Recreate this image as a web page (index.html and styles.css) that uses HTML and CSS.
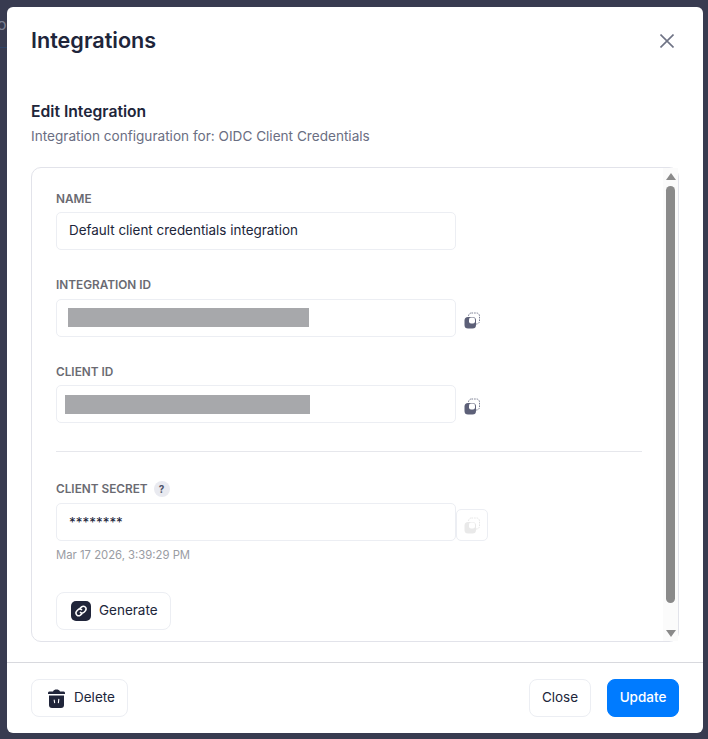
FILE: index.html
```html
<!DOCTYPE html>
<html lang="en">
<head>
<meta charset="utf-8">
<title>Integrations</title>
<link rel="stylesheet" href="styles.css">
</head>
<body>
<div class="peek"><span class="peek-text">o</span></div>
<main class="modal">
  <header class="modal-head">
    <h1 class="title">Integrations</h1>
    <button class="close-x" aria-label="Close">
      <svg width="14" height="14" viewBox="0 0 14 14"><path d="M.5 .5 L13.5 13.5 M13.5 .5 L.5 13.5" stroke="#6f7385" stroke-width="1.6" fill="none"/></svg>
    </button>
  </header>
  <section class="modal-body">
    <h2 class="section-title">Edit Integration</h2>
    <p class="section-sub">Integration configuration for: OIDC Client Credentials</p>
    <div class="panel">
      <div class="field">
        <label class="label">NAME</label>
        <div class="row"><div class="input">Default client credentials integration</div></div>
      </div>
      <div class="field field-int">
        <label class="label">INTEGRATION ID</label>
        <div class="row">
          <div class="input"><span class="redact redact-a"></span></div>
          <span class="copy">
            <svg width="17" height="17" viewBox="0 0 17 17"><use href="#copy-icon"/></svg>
          </span>
        </div>
      </div>
      <div class="field">
        <label class="label">CLIENT ID</label>
        <div class="row">
          <div class="input"><span class="redact redact-b"></span></div>
          <span class="copy">
            <svg width="17" height="17" viewBox="0 0 17 17"><use href="#copy-icon"/></svg>
          </span>
        </div>
      </div>
      <hr class="divider">
      <div class="field secret">
        <label class="label">CLIENT SECRET <span class="help">?</span></label>
        <div class="row">
          <div class="input stars">********</div>
          <span class="copy-box">
            <svg width="17" height="17" viewBox="0 0 17 17"><use href="#copy-icon-off"/></svg>
          </span>
        </div>
        <p class="stamp">Mar 17 2026, 3:39:29 PM</p>
      </div>
      <button class="btn btn-gen">
        <svg class="gen-icon" width="20" height="20" viewBox="0 0 20 20">
          <rect width="20" height="20" rx="5" fill="#20253a"/>
          <path d="M9 7.4 L10.6 5.9 a2.7 2.7 0 0 1 3.8 3.8 L13 11.2 a2.7 2.7 0 0 1 -3.6 .2 M11 12.6 L9.4 14.1 a2.7 2.7 0 0 1 -3.8 -3.8 L7 8.8 a2.7 2.7 0 0 1 3.6 -.2" stroke="#fff" stroke-width="1.5" fill="none" stroke-linecap="round"/>
        </svg>
        <span class="btn-text">Generate</span>
      </button>
      <div class="scrollbar">
        <span class="arrow-up"></span>
        <span class="thumb"></span>
        <span class="arrow-down"></span>
      </div>
    </div>
  </section>
  <footer class="modal-foot">
    <button class="btn btn-del">
      <svg width="17" height="19" viewBox="0 0 17 19">
        <path d="M0 4 C0 3 1 2.6 2 2.6 H5 C5.5 .8 7 .4 8.5 .4 C10 .4 11.5 .8 12 2.6 H15 C16 2.6 17 3 17 4 V5 H0 Z" fill="#20253a"/>
        <path d="M1 6.6 H16 V16 A3 3 0 0 1 13 19 H4 A3 3 0 0 1 1 16 Z" fill="#20253a"/>
        <path d="M6.2 11 L6.6 13.6 M10.8 10.4 L10.4 13.6" stroke="#fff" stroke-width="1.1" stroke-linecap="round"/>
      </svg>
      <span class="btn-text">Delete</span>
    </button>
    <div class="foot-right">
      <button class="btn btn-close"><span class="btn-text">Close</span></button>
      <button class="btn btn-primary"><span class="btn-text">Update</span></button>
    </div>
  </footer>
</main>
<svg class="defs" width="0" height="0" aria-hidden="true">
  <defs>
    <g id="copy-icon">
      <rect x="4.5" y="1" width="11" height="11" rx="3" fill="none" stroke="#7d8094" stroke-width="1" stroke-dasharray="1.6 1"/>
      <rect x="0.5" y="5" width="11.5" height="11.5" rx="3.5" fill="#5d6078"/>
      <rect x="5" y="5.6" width="6" height="6" rx="2" fill="#fff"/>
    </g>
    <g id="copy-icon-off">
      <rect x="4.5" y="1" width="11" height="11" rx="3" fill="none" stroke="#e6e6e6" stroke-width="1" stroke-dasharray="1.6 1"/>
      <rect x="0.5" y="5" width="11.5" height="11.5" rx="3.5" fill="#e9e9e9"/>
      <rect x="5" y="5.6" width="6" height="6" rx="2" fill="#fff"/>
    </g>
  </defs>
</svg>
</body>
</html>
```
FILE: styles.css
```css
* { box-sizing: border-box; }
html, body { margin: 0; height: 739px; overflow: hidden; }
body {
  background: #383b50;
  padding: 7px 5px 6px 7px;
  font-family: Inter, "Noto Sans", sans-serif;
  color: #20253a;
  position: relative;
}
.peek { position: absolute; left: 0; top: 14px; width: 7px; height: 34px; border-bottom: 1px solid #2f4468; overflow: hidden; }
.peek-text { position: absolute; left: -3px; top: 0; font-size: 16px; color: #7d8092; }
.defs { position: absolute; }
.modal {
  background: #fff;
  border-radius: 6px;
  height: 726px;
  display: flex;
  flex-direction: column;
}
.modal-head {
  display: flex;
  justify-content: space-between;
  align-items: center;
  height: 66px;
  padding: 0 29px 0 24px;
}
.title { margin: 0; font-size: 21.6px; font-weight: 600; line-height: 28px; }
.close-x { border: 0; background: none; padding: 2px 0 0; display: flex; }
.modal-body { flex: 1; padding: 29px 24px 20px; display: flex; flex-direction: column; min-height: 0; }
.section-title { margin: 0; font-size: 15.7px; font-weight: 600; line-height: 20px; }
.section-sub { margin: 4px 0 0; font-size: 13.6px; line-height: 20px; color: #6a6e82; }
.panel {
  position: relative;
  margin-top: 21px;
  flex: 1;
  border: 1px solid #e2e3ea;
  border-radius: 10px;
  padding: 24px 36px 11px 24px;
}
.field { margin-bottom: 28px; }
.label { display: flex; align-items: center; gap: 6px; height: 14px; font-size: 11.8px; font-weight: 600; color: #6a6a72; margin-bottom: 6px; }
.field-int .label { margin-bottom: 7px; }
.secret .label { margin-bottom: 7px; }
.row { display: flex; align-items: flex-start; gap: 8px; }
.input {
  width: 400px;
  height: 38px;
  border: 1px solid #eceef3;
  border-radius: 5px;
  padding: 0 12px 2px;
  display: flex;
  align-items: center;
  font-size: 13.45px;
}
.stars { padding-bottom: 0; }
.redact { display: block; height: 19px; background: #a7a8ab; }
.redact-a { width: 241px; margin: 0 0 -1px -1px; }
.redact-b { width: 244.5px; margin: 3px 0 0 -4px; }
.copy { display: flex; margin: 13px 0 0 0; }
.copy-box { margin: 6px 0 0 -8px; width: 32px; height: 32px; border: 1px solid #eceef3; border-radius: 5px; display: flex; align-items: center; justify-content: center; }
.divider { border: 0; border-top: 1px solid #e6e7ec; margin: 0 0 30px; }
.secret { margin-bottom: 29px; }
.help { width: 16px; height: 16px; border-radius: 50%; background: #e9eaf0; color: #4e5268; font-size: 10px; font-weight: 700; display: flex; align-items: center; justify-content: center; }
.stamp { margin: 7px 0 0; font-size: 11.3px; line-height: 15px; color: #9a9ca3; }
.btn {
  font-family: inherit;
  font-size: 13.5px;
  color: #20253a;
  background: #fff;
  border: 1px solid #eceef3;
  border-radius: 8px;
  height: 38px;
  display: inline-flex;
  align-items: center;
  padding: 0;
}
.btn-text { margin-top: -2px; }
.btn-gen { width: 115px; padding-left: 14px; gap: 8px; }
.scrollbar { position: absolute; right: 0; top: 0; bottom: 0; width: 15px; background: #fbfbfb; display: flex; flex-direction: column; align-items: center; padding-top: 5px; }
.arrow-up { width: 0; height: 0; border-left: 5px solid transparent; border-right: 5px solid transparent; border-bottom: 7px solid #8a8a8a; }
.arrow-down { width: 0; height: 0; border-left: 5px solid transparent; border-right: 5px solid transparent; border-top: 7px solid #8a8a8a; margin-top: 27px; }
.thumb { width: 9px; height: 417px; margin-top: 6px; border-radius: 5px; background: #8a8a8a; }
.modal-foot {
  border-top: 1px solid #d8d9de;
  height: 71px;
  padding: 16px 24px 0;
  display: flex;
  justify-content: space-between;
  align-items: flex-start;
}
.btn-del { width: 97px; padding-left: 16px; gap: 9px; }
.foot-right { display: flex; gap: 16px; }
.btn-close { width: 62px; justify-content: center; }
.btn-primary { width: 72px; justify-content: center; background: #007bff; border-color: #007bff; color: #fff; font-weight: 500; }
```
